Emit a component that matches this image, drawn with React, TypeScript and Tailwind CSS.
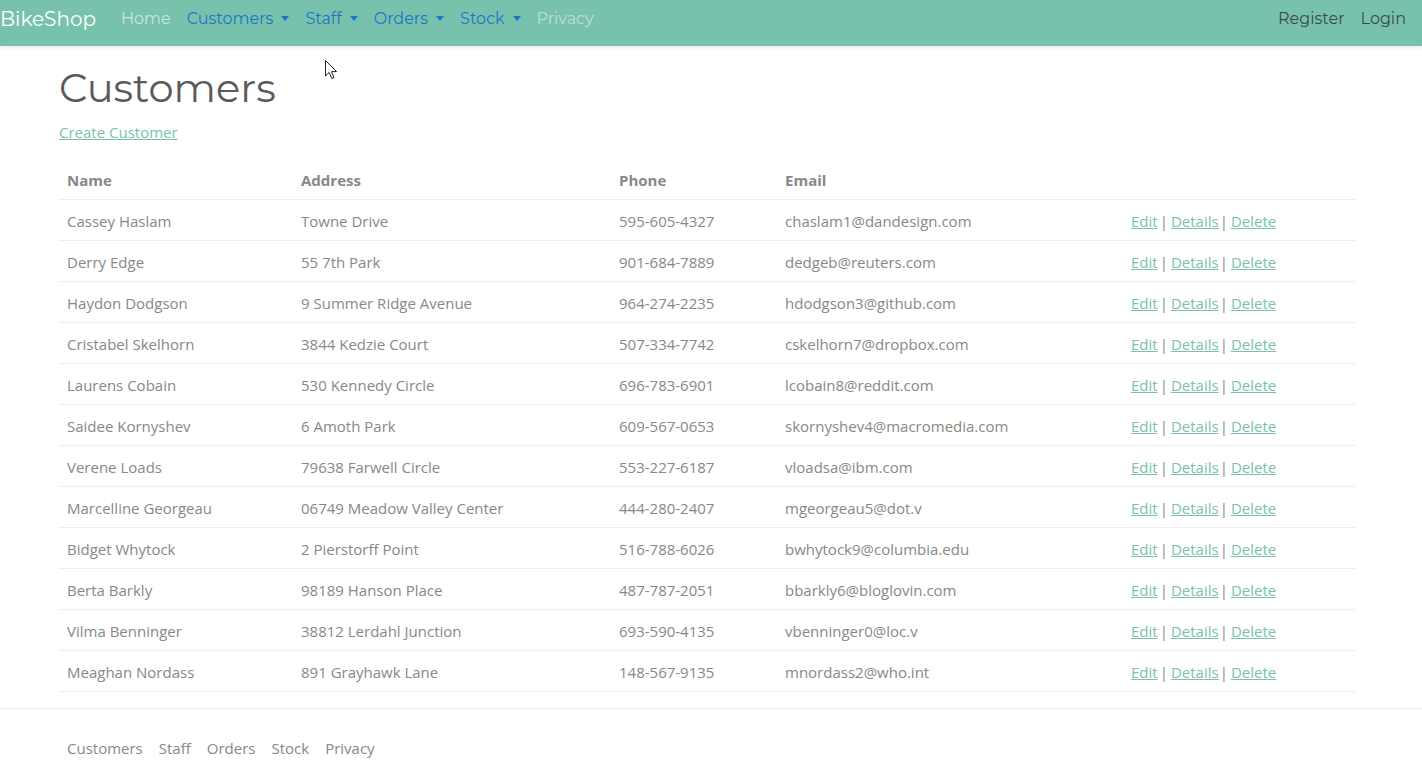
import React from 'react';

type Customer = {
  name: string;
  address: string;
  phone: string;
  email: string;
};

const customers: Customer[] = [
  { name: 'Cassey Haslam', address: 'Towne Drive', phone: '595-605-4327', email: 'chaslam1@dandesign.com' },
  { name: 'Derry Edge', address: '55 7th Park', phone: '901-684-7889', email: 'dedgeb@reuters.com' },
  { name: 'Haydon Dodgson', address: '9 Summer Ridge Avenue', phone: '964-274-2235', email: 'hdodgson3@github.com' },
  { name: 'Cristabel Skelhorn', address: '3844 Kedzie Court', phone: '507-334-7742', email: 'cskelhorn7@dropbox.com' },
  { name: 'Laurens Cobain', address: '530 Kennedy Circle', phone: '696-783-6901', email: 'lcobain8@reddit.com' },
  { name: 'Saidee Kornyshev', address: '6 Amoth Park', phone: '609-567-0653', email: 'skornyshev4@macromedia.com' },
  { name: 'Verene Loads', address: '79638 Farwell Circle', phone: '553-227-6187', email: 'vloadsa@ibm.com' },
  { name: 'Marcelline Georgeau', address: '06749 Meadow Valley Center', phone: '444-280-2407', email: 'mgeorgeau5@dot.v' },
  { name: 'Bidget Whytock', address: '2 Pierstorff Point', phone: '516-788-6026', email: 'bwhytock9@columbia.edu' },
  { name: 'Berta Barkly', address: '98189 Hanson Place', phone: '487-787-2051', email: 'bbarkly6@bloglovin.com' },
  { name: 'Vilma Benninger', address: '38812 Lerdahl Junction', phone: '693-590-4135', email: 'vbenninger0@loc.v' },
  { name: 'Meaghan Nordass', address: '891 Grayhawk Lane', phone: '148-567-9135', email: 'mnordass2@who.int' },
];

const heading = "font-['Montserrat','Open_Sans',sans-serif]";
const body = "font-['Segoe_UI','Open_Sans',sans-serif]";

const Dropdown: React.FC<{ label: string }> = ({ label }) => (
  <a className="flex items-center gap-[8px] px-2 text-[#1c74c6]">
    {label}
    <span className="mt-[-2px] h-0 w-0 border-x-[4.5px] border-t-[5px] border-x-transparent border-t-[#1c74c6]" />
  </a>
);

const Navbar: React.FC = () => (
  <nav
    className={`${heading} flex h-[46px] items-center bg-[#78c2ad] pb-[8px] text-[16px] shadow-[0_2px_4px_rgba(0,0,0,0.08)]`}
  >
    <a className="mr-[17px] text-[20px] text-white">BikeShop</a>
    <div className="flex items-center">
      <a className="px-2 text-white/60">Home</a>
      <Dropdown label="Customers" />
      <Dropdown label="Staff" />
      <Dropdown label="Orders" />
      <Dropdown label="Stock" />
      <a className="px-2 text-white/50">Privacy</a>
    </div>
    <div className="ml-auto mr-[8px] flex items-center">
      <a className="px-2 text-[#3d4a52]">Register</a>
      <a className="px-2 text-[#3d4a52]">Login</a>
    </div>
  </nav>
);

const Actions: React.FC = () => (
  <span className="text-[#888]">
    <a className="text-[#78c2ad] underline">Edit</a>
    <span className="ml-[2px] mr-[3px]">|</span>
    <a className="text-[#78c2ad] underline">Details</a>
    <span className="ml-[1px] mr-[3px]">|</span>
    <a className="text-[#78c2ad] underline">Delete</a>
  </span>
);

const Cursor: React.FC = () => (
  <svg className="absolute left-[325px] top-[60px]" width="13" height="20" viewBox="0 0 13 20">
    <path d="M0.5 0.5 L0.5 16 L4.2 12.4 L6.8 18.6 L9 17.6 L6.5 11.6 L11.6 11.6 Z" fill="white" stroke="#222" strokeWidth="1" />
  </svg>
);

export default function App() {
  return (
    <div className={`${body} relative min-h-[762px] bg-white text-[15px] text-[#888]`}>
      <Navbar />
      <Cursor />
      <main className="ml-[59px] w-[1297px]">
        <h1 className={`${heading} mt-[18px] text-[40px] leading-[1.2] text-[#5a5a5a]`}>Customers</h1>
        <p className="mt-[8px] leading-[24px]">
          <a className="text-[#78c2ad] underline">Create Customer</a>
        </p>
        <table className="mt-[15px] w-full border-collapse text-left">
          <thead>
            <tr className="h-[40px] border-b border-[#eeeeee]">
              <th className="w-[234px] px-2 pt-[2px] font-bold">Name</th>
              <th className="w-[318px] px-2 pt-[2px] font-bold">Address</th>
              <th className="w-[166px] px-2 pt-[2px] font-bold">Phone</th>
              <th className="w-[346px] px-2 pt-[2px] font-bold">Email</th>
              <th className="px-2" />
            </tr>
          </thead>
          <tbody>
            {customers.map((c) => (
              <tr key={c.name} className="h-[41px] border-b border-[#eeeeee]">
                <td className="px-2 pt-[4px]">{c.name}</td>
                <td className="px-2 pt-[4px]">{c.address}</td>
                <td className="px-2 pt-[4px]">{c.phone}</td>
                <td className="px-2 pt-[4px]">{c.email}</td>
                <td className="px-2 pt-[4px]">
                  <Actions />
                </td>
              </tr>
            ))}
          </tbody>
        </table>
      </main>
      <footer className="mt-[16px] border-t border-[#e9ecef]">
        <div className="ml-[59px] flex pt-[27px] leading-[24px]">
          {['Customers', 'Staff', 'Orders', 'Stock', 'Privacy'].map((l) => (
            <a key={l} className="px-2 text-[#888]">
              {l}
            </a>
          ))}
        </div>
      </footer>
    </div>
  );
}
